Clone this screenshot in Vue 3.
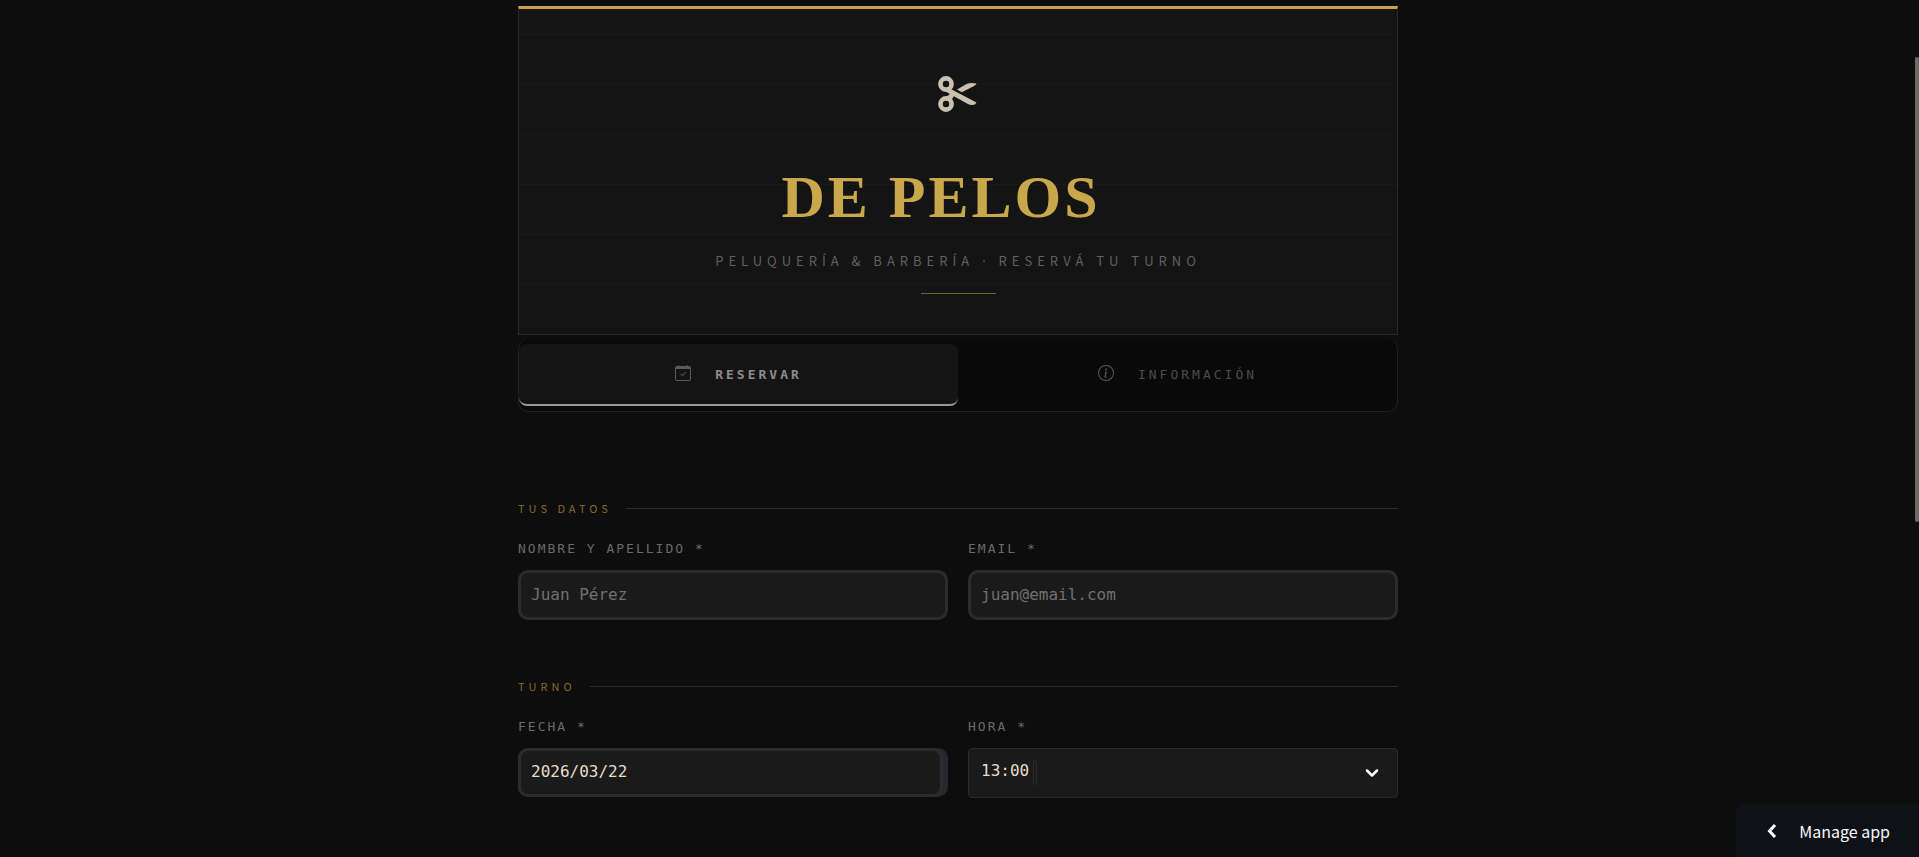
<template>
  <div class="page">
    <main class="container">
      <header class="hero">
        <svg class="hero-icon" viewBox="0 0 40 36" aria-hidden="true">
          <path d="M19 13.500L29 7.800Q33 6.300 38.500 7.600Q38 9 35.500 10.300L23.800 16.300Z" />
          <path d="M7 10L38.500 26.500Q37.500 29.300 33.500 29Q31 28.800 28.500 27.200L11 17.500L4 13Z" />
          <circle cx="8" cy="8" r="5.400" />
          <circle cx="8" cy="28" r="5.400" />
          <path d="M8 21L14 16.500L16.500 19L13 25Z" />
          <circle class="hole" cx="8" cy="8" r="3.200" />
          <circle class="hole" cx="8" cy="28" r="3.200" />
        </svg>
        <h1 class="hero-title">DE PELOS</h1>
        <p class="hero-subtitle">PELUQUERÍA &amp; BARBERÍA <span class="dot">·</span> RESERVÁ TU TURNO</p>
        <div class="hero-divider"></div>
      </header>

      <nav class="tabs">
        <button
          v-for="tab in tabs"
          :key="tab.id"
          type="button"
          class="tab"
          :class="{ 'tab-active': activeTab === tab.id }"
          @click="activeTab = tab.id"
        >
          <svg class="tab-icon" viewBox="0 0 16 16" aria-hidden="true">
            <path v-for="d in tab.icon" :key="d" :d="d" />
          </svg>
          <span>{{ tab.label }}</span>
        </button>
      </nav>

      <form class="form" @submit.prevent>
        <section class="section">
          <h2 class="section-title">TUS DATOS</h2>
          <div class="fields">
            <div class="field">
              <label for="nombre">NOMBRE Y APELLIDO *</label>
              <input id="nombre" v-model="form.nombre" class="control" type="text" placeholder="Juan Pérez" />
            </div>
            <div class="field">
              <label for="email">EMAIL *</label>
              <input id="email" v-model="form.email" class="control" type="email" placeholder="juan@email.com" />
            </div>
          </div>
        </section>

        <section class="section">
          <h2 class="section-title">TURNO</h2>
          <div class="fields">
            <div class="field">
              <label for="fecha">FECHA *</label>
              <div class="date-box">
                <input id="fecha" v-model="form.fecha" class="control control-date" type="text" />
              </div>
            </div>
            <div class="field">
              <label for="hora">HORA *</label>
              <div class="select-box">
                <select id="hora" v-model="form.hora">
                  <option v-for="h in horas" :key="h" :value="h">{{ h }}</option>
                </select>
                <span class="select-cursor"></span>
                <svg class="select-arrow" viewBox="0 0 14 10" aria-hidden="true">
                  <path d="M2 2.500L7 7.500L12 2.500" />
                </svg>
              </div>
            </div>
          </div>
        </section>
      </form>
    </main>

    <div class="scroll-thumb"></div>

    <button type="button" class="manage-btn">
      <svg class="manage-icon" viewBox="0 0 10 16" aria-hidden="true">
        <path d="M8 2L2.500 8L8 14" />
      </svg>
      <span>Manage app</span>
    </button>
  </div>
</template>

<script setup>
import { ref } from 'vue'

const activeTab = ref('reservar')

const tabs = [
  {
    id: 'reservar',
    label: 'RESERVAR',
    icon: [
      'M10.854 7.146a.5.5 0 0 1 0 .708l-3 3a.5.5 0 0 1-.708 0l-1.500-1.500a.5.5 0 1 1 .708-.708L7.500 9.793l2.646-2.647a.5.5 0 0 1 .708 0',
      'M3.500 0a.5.5 0 0 1 .5.5V1h8V.5a.5.5 0 0 1 1 0V1h1a2 2 0 0 1 2 2v11a2 2 0 0 1-2 2H2a2 2 0 0 1-2-2V3a2 2 0 0 1 2-2h1V.5a.5.5 0 0 1 .5-.5M1 4v10a1 1 0 0 0 1 1h12a1 1 0 0 0 1-1V4z'
    ]
  },
  {
    id: 'informacion',
    label: 'INFORMACIÓN',
    icon: [
      'M8 15A7 7 0 1 1 8 1a7 7 0 0 1 0 14m0 1A8 8 0 1 0 8 0a8 8 0 0 0 0 16',
      'm8.930 6.588-2.290.287-.082.380.450.083c.294.070.352.176.288.469l-.738 3.468c-.194.897.105 1.319.808 1.319.545 0 1.178-.252 1.465-.598l.088-.416c-.2.176-.492.246-.686.246-.275 0-.375-.193-.304-.533zM9 4.500a1 1 0 1 1-2 0 1 1 0 0 1 2 0'
    ]
  }
]

const horas = ['13:00', '13:30', '14:00', '14:30', '15:00']

const form = ref({
  nombre: '',
  email: '',
  fecha: '2026/03/22',
  hora: '13:00'
})
</script>

<style>
body {
  background-color: #0d0d0d;
}
</style>

<style scoped>
.page {
  min-height: 100vh;
  box-sizing: border-box;
  padding: 6px 19px 52px 16px;
  background-color: #0d0d0d;
  font-family: "Noto Sans CJK SC", "Noto Sans", sans-serif;
}

.container {
  max-width: 880px;
  margin: 0 auto;
}

/* Encabezado */
.hero {
  display: flex;
  flex-direction: column;
  align-items: center;
  padding: 67px 16px 40px;
  border: 1px solid #2a2a2a;
  border-top: 3px solid #c8a050;
  background: repeating-linear-gradient(0deg, transparent 0, transparent 49px, #1a1a18 49px, #1a1a18 50px) #141414;
}

.hero-icon {
  width: 40px;
  height: 36px;
  fill: #c9c0b0;
}

.hero-icon circle {
  fill: none;
  stroke: #c9c0b0;
  stroke-width: 5;
}

.hero-icon .hole {
  fill: #141414;
  stroke: none;
}

.hero-title {
  margin: 49px 0 0;
  padding-right: 34px;
  font-family: "Liberation Serif", serif;
  font-size: 60px;
  font-weight: 700;
  line-height: 72px;
  letter-spacing: 3px;
  color: #c9a84c;
}

.hero-subtitle {
  margin: 18px 0 0;
  font-size: 13px;
  line-height: 20px;
  letter-spacing: 5px;
  color: #606060;
}

.hero-subtitle .dot {
  font-family: "Noto Sans", sans-serif;
}

.hero-divider {
  width: 75px;
  height: 1px;
  margin-top: 22px;
  background-color: #74602f;
}

/* Pestañas */
.tabs {
  display: flex;
  margin-top: 4px;
  padding: 5px 0;
  border: 1px solid #202020;
  border-top: none;
  border-radius: 10px;
  background-color: #090909;
}

.tab {
  flex: 1;
  display: flex;
  align-items: center;
  justify-content: center;
  gap: 24px;
  height: 62px;
  padding: 2px 12px 0;
  border: none;
  border-bottom: 2px solid transparent;
  border-radius: 8px;
  background: none;
  font-family: "DejaVu Sans Mono", monospace;
  font-size: 13px;
  line-height: 20px;
  letter-spacing: 3px;
  color: #4c4c4c;
  cursor: pointer;
}

.tab-active {
  border-bottom-color: #999999;
  background-color: #141414;
  font-weight: 700;
  color: #8c8c8c;
}

.tab-icon {
  width: 16px;
  height: 16px;
  margin-bottom: 4px;
  fill: #5a5a5a;
}

/* Formulario */
.form {
  display: flex;
  flex-direction: column;
  gap: 56px;
  margin-top: 86px;
}

.section-title {
  display: flex;
  align-items: center;
  gap: 14px;
  margin: 0 0 21px;
  font-size: 11px;
  font-weight: 400;
  line-height: 20px;
  letter-spacing: 4px;
  color: #8a6a2c;
}

.section-title::after {
  content: "";
  flex: 1;
  height: 1px;
  background-color: #2c2c2c;
}

.fields {
  display: grid;
  grid-template-columns: 1fr 1fr;
  gap: 20px;
}

.field {
  display: flex;
  flex-direction: column;
  gap: 11px;
}

.field label {
  font-family: "DejaVu Sans Mono", monospace;
  font-size: 13px;
  line-height: 20px;
  letter-spacing: 2px;
  color: #6a6a6a;
}

.control {
  width: 100%;
  height: 50px;
  box-sizing: border-box;
  padding: 0 10px 2px;
  border: 3px solid #2c2c2e;
  border-radius: 10px;
  outline: none;
  background-color: #1a1a1a;
  font-family: "DejaVu Sans Mono", monospace;
  font-size: 16px;
  color: #e8dcc8;
}

.control::placeholder {
  color: #707070;
  opacity: 1;
}

.date-box {
  padding-right: 5px;
  border-radius: 10px;
  background-color: #262730;
}

.control-date {
  display: block;
  height: 49px;
}

.select-box {
  position: relative;
}

.select-box select {
  display: block;
  width: 100%;
  height: 50px;
  padding: 0 40px 6px 12px;
  border: 1px solid #2c2c2c;
  border-radius: 4px;
  outline: none;
  appearance: none;
  background-color: #1a1a1a;
  font-family: "DejaVu Sans Mono", monospace;
  font-size: 16px;
  color: #e8dcc8;
}

.select-cursor {
  position: absolute;
  top: 12px;
  left: 65px;
  width: 2px;
  height: 23px;
  border: 1px solid #2a2a2a;
  border-radius: 2px;
  pointer-events: none;
}

.select-arrow {
  position: absolute;
  top: 20px;
  right: 19px;
  width: 14px;
  height: 10px;
  fill: none;
  stroke: #ffffff;
  stroke-width: 2.5;
  stroke-linecap: round;
  stroke-linejoin: round;
  pointer-events: none;
}

.scroll-thumb {
  position: fixed;
  top: 57px;
  right: 0;
  width: 4px;
  height: 465px;
  border-radius: 2px;
  background-color: #6c6a67;
}

.manage-btn {
  position: fixed;
  right: 0;
  bottom: 0;
  display: flex;
  align-items: center;
  gap: 22px;
  height: 53px;
  padding: 0 29px 0 31px;
  border: none;
  border-radius: 10px 0 0 0;
  background-color: #0e1117;
  font-family: "Noto Sans CJK SC", "Noto Sans", sans-serif;
  font-size: 16px;
  line-height: 24px;
  color: #fafafa;
  cursor: pointer;
}

.manage-icon {
  width: 10px;
  height: 16px;
  fill: none;
  stroke: #ffffff;
  stroke-width: 3;
}
</style>
